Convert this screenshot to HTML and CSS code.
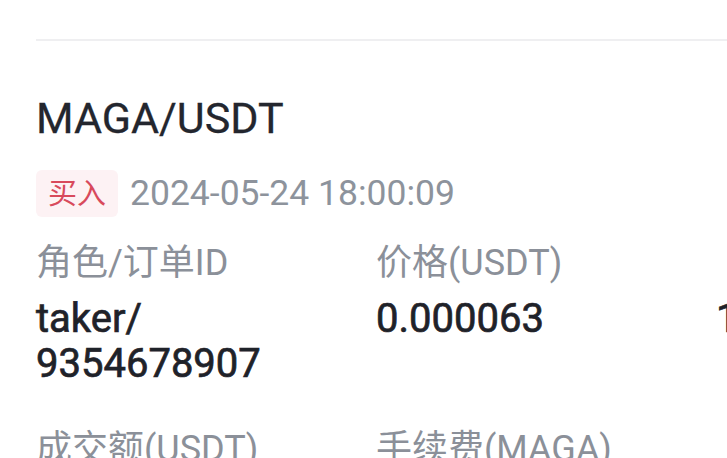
FILE: index.html
```html
<!DOCTYPE html>
<html lang="zh-CN">

<head>
    <meta charset="UTF-8">
    <meta name="viewport" content="width=device-width, initial-scale=1.0">
    <title>成交明细</title>
    <link rel="stylesheet" href="styles.css">
</head>

<body>
    <div class="page">
        <div class="divider"></div>

        <div class="trade">
            <h1 class="pair">MAGA/USDT</h1>

            <div class="meta">
                <span class="side buy">买入</span>
                <span class="time">2024-05-24 18:00:09</span>
            </div>

            <div class="fields">
                <div class="field">
                    <div class="label">角色/订单ID</div>
                    <div class="value">taker/<br>9354678907</div>
                </div>
                <div class="field">
                    <div class="label">价格(USDT)</div>
                    <div class="value">0.000063</div>
                </div>
                <div class="field end">
                    <div class="label">成交数量(MAGA)</div>
                    <div class="value">158730158.730158</div>
                </div>

                <div class="field">
                    <div class="label">成交额(USDT)</div>
                    <div class="value">9999.999999</div>
                </div>
                <div class="field">
                    <div class="label">手续费(MAGA)</div>
                    <div class="value">158730.158730</div>
                </div>
                <div class="field end">
                    <div class="label">成交时间</div>
                    <div class="value">18:00:09</div>
                </div>
            </div>
        </div>
    </div>
</body>

</html>
```

FILE: styles.css
```css
html,
body {
    margin: 0;
    overflow: hidden;
    /* the page is wider than the window, the right column is cut */
    background-color: #ffffff;
}

body {
    font-family: Roboto, "Noto Sans CJK SC", sans-serif;
}

.page {
    padding: 39px 0 0 36px;
}

.divider {
    height: 2px;
    background-color: #efeff1;
}

.pair {
    margin: 51px 0 0;
    font-size: 43px;
    line-height: 52px;
    font-weight: 400;
    color: #23262e;
    -webkit-text-stroke: 0.3px #23262e;
}

.meta {
    display: flex;
    align-items: center;
    margin-top: 26px;
}

.side {
    display: inline-block;
    height: 47px;
    padding: 2px 12px 0;
    box-sizing: border-box;
    border-radius: 6px;
    font-size: 29px;
    line-height: 45px;
}

.side.buy {
    background-color: #fdf2f4;
    color: #d84a5c;
}

.time {
    margin-left: 12px;
    font-size: 35.5px;
    line-height: 47px;
    color: #8d939c;
}

.fields {
    display: grid;
    grid-template-columns: 340px 340px 340px;
    row-gap: 40px;
    margin-top: 23px;
}

.field.end {
    text-align: right;
}

.label {
    font-size: 36px;
    line-height: 46px;
    color: #8b9099;
    white-space: nowrap;
}

.value {
    margin-top: 10px;
    font-size: 40px;
    line-height: 45px;
    font-weight: 400;
    color: #1f2229;
    -webkit-text-stroke: 0.7px #1f2229;
    /* medium weight, between regular and bold */
    white-space: nowrap;
}
```
